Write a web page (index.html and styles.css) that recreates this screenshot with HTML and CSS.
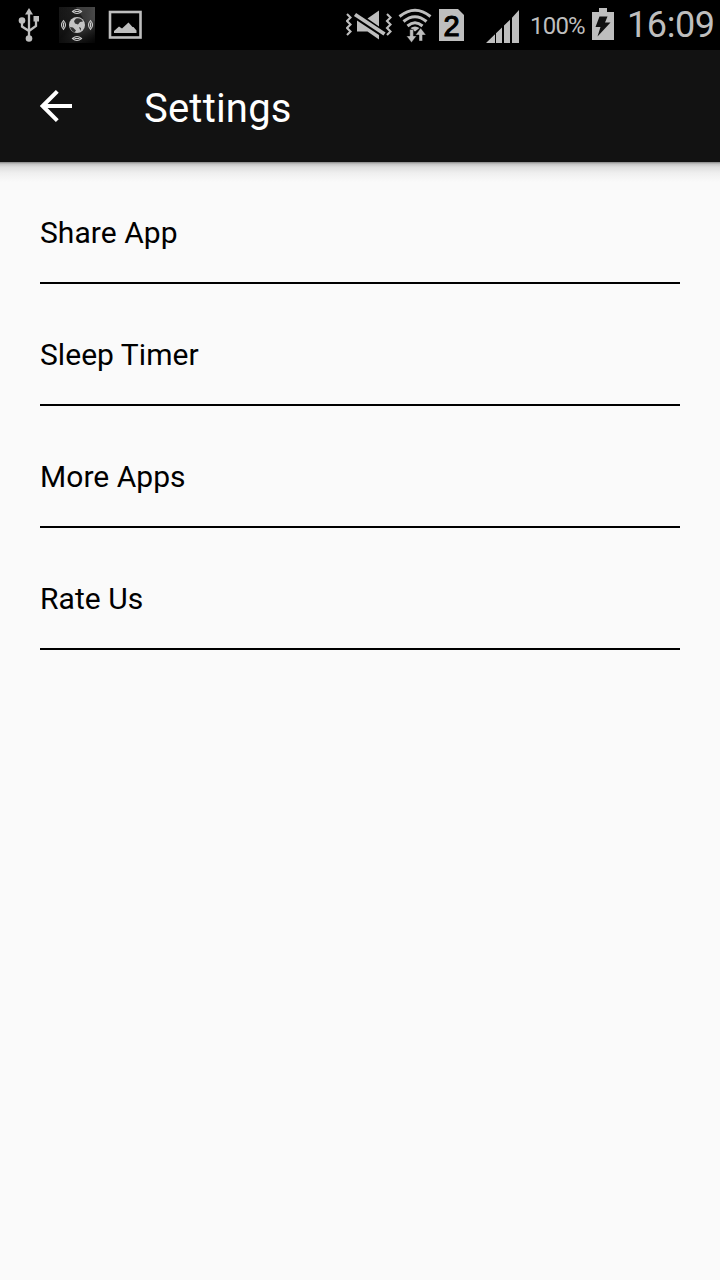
FILE: index.html
```html
<!DOCTYPE html>
<html lang="en">
<head>
    <meta charset="UTF-8">
    <title>Settings</title>
    <link rel="stylesheet" href="styles.css">
</head>
<body>

    <div class="status-bar">
        <div class="notifications">
            <!-- usb -->
            <svg width="22" height="50" viewBox="0 0 22 50" fill="#bebebe">
                <path d="M11 8l4 6.500H7z"/>
                <path d="M11 13v26M4 20v6.500L11 31M18 20v6L11 31" fill="none" stroke="#bebebe" stroke-width="2.300"/>
                <circle cx="4" cy="20.500" r="3.300"/>
                <rect x="15.500" y="16" width="5.500" height="5.500"/>
                <circle cx="11" cy="38.500" r="3.300"/>
            </svg>
            <!-- radio app -->
            <svg width="36" height="50" viewBox="59 0 36 50">
                <defs>
                    <linearGradient id="tile" x1="0" y1="0" x2="1" y2="1">
                        <stop offset="0" stop-color="#161616"/>
                        <stop offset=".45" stop-color="#272727"/>
                        <stop offset=".68" stop-color="#565656"/>
                        <stop offset="1" stop-color="#101010"/>
                    </linearGradient>
                    <linearGradient id="shade" x1="0" y1="0" x2="0" y2="1">
                        <stop offset="0" stop-color="#000" stop-opacity="0"/>
                        <stop offset="1" stop-color="#000" stop-opacity=".75"/>
                    </linearGradient>
                </defs>
                <rect x="59" y="7" width="36" height="36" fill="url(#tile)"/>
                <path d="M76 7h19v14l-9 2z" fill="#777" opacity=".35"/>
                <rect x="59" y="7" width="36" height="36" fill="url(#shade)"/>
                <circle cx="77" cy="25" r="8" fill="#c4c4c4"/>
                <path d="M76 18.500q5-1 7 3l-3 .5-2 2.500-3-1-1-2.500zM70 27l3 .5 3 3-1.500 2q-3.500-1.500-4.500-5.500zM79 27l2 1-.5 3z" fill="#333"/>
                <g fill="none" stroke="#cacaca" stroke-width="1.100">
                    <path d="M72.500 11.500q4.500-4 9 0q-4.500 4-9 0zM74.500 11.500h5"/>
                    <path d="M72.500 38.500q4.500-4 9 0q-4.500 4-9 0zM74.500 38.500h5"/>
                    <path d="M63.500 20.500q-4 4.500 0 9q4-4.500 0-9zM63.500 22.500v5"/>
                    <path d="M90.500 20.500q-4 4.500 0 9q4-4.500 0-9zM90.500 22.500v5"/>
                </g>
            </svg>
            <!-- screenshot saved -->
            <svg width="34" height="50" viewBox="108 0 34 50">
                <rect x="110" y="12" width="30.500" height="25.500" fill="none" stroke="#bebebe" stroke-width="2.600"/>
                <path d="M114 33v-2l5-4.500 3 2 6.500-6 4 4.500h1l3 3.500v2.500z" fill="#bebebe"/>
            </svg>
        </div>

        <div class="system">
            <!-- muted, vibrate -->
            <svg width="47" height="50" viewBox="346 0 47 50">
                <path d="M357 20.500L379 35v4.500L367.500 31.500H357zM367.500 18.500L379 10.500v16z" fill="#bebebe"/>
                <path d="M355 14.500l29.500 19.500" stroke="#bebebe" stroke-width="3.800"/>
                <path d="M347 14l3.500 3.500-3.500 3.500 3.500 3.500-3.500 3.500 3.500 3.500-3.500 3.500M387 14l3.500 3.500-3.500 3.500 3.500 3.500-3.500 3.500 3.500 3.500-3.500 3.500" fill="none" stroke="#bebebe" stroke-width="2.100"/>
            </svg>
            <!-- wifi -->
            <svg class="wifi" width="34" height="50" viewBox="398 0 34 50">
                <g fill="none" stroke="#bebebe" stroke-width="3">
                    <path d="M399.500 16.500q15.500-12.500 31 0"/>
                    <path d="M403.500 21.500q11.500-9.500 23 0"/>
                    <path d="M407.500 26q7.500-6.500 15 0"/>
                </g>
                <path d="M410.500 28q4.500-3 9 0l-4.500 3.500z" fill="#bebebe"/>
                <path d="M409.800 29.500h3.600v6.500h3.100l-5 6.500-5-6.500h3.300zM419 41v-6h-3.500l5.200-7 5.300 7h-3.500v6z" fill="#bebebe" stroke="#000" stroke-width=".4"/>
            </svg>
            <!-- second sim -->
            <div class="sim">2</div>
            <svg class="signal" width="34" height="50" viewBox="486 0 34 50" fill="#bebebe">
                <path d="M486 43l9-8.700V43zM496 33.300l6-5.800V43h-6zM504 25.500l6-5.800V43h-6zM512 17.700l7-7.700v33h-7z"/>
            </svg>
            <span class="percent">100%</span>
            <!-- charging battery -->
            <svg class="battery" width="22" height="50" viewBox="592 0 22 50">
                <path d="M599 8h8v4h7v28h-22V12h7z" fill="#bebebe"/>
                <path d="M599.500 16.500h8l-2.500 6h5.500L597.500 36.500l3-9.500h-5z" fill="#111"/>
            </svg>
            <span class="clock">16:09</span>
        </div>
    </div>

    <div class="toolbar">
        <svg class="back" width="32" height="32" viewBox="0 0 32 32">
            <path d="M32 16H4M17.300 1.400L2.700 16l14.600 14.600" fill="none" stroke="#fff" stroke-width="4"/>
        </svg>
        <h1>Settings</h1>
    </div>

    <ul class="settings">
        <li>Share App</li>
        <li>Sleep Timer</li>
        <li>More Apps</li>
        <li>Rate Us</li>
    </ul>

</body>
</html>
```
FILE: styles.css
```css
body {
    margin: 0;
    min-height: 1280px;
    background-color: #fafafa;
    font-family: Roboto, sans-serif;
    color: #000;
}

svg {
    display: block;
    flex: none;
}

.status-bar {
    display: flex;
    justify-content: space-between;
    height: 50px;
    padding: 0 6px 0 18px;
    background-color: #000;
    color: #bebebe;
}

.notifications {
    display: flex;
}

.notifications svg:nth-child(2) {
    margin: 0 13px 0 19px;
}

.system {
    display: flex;
    align-items: center;
}

.wifi {
    margin-left: 5px;
}

.sim {
    width: 25px;
    height: 32px;
    margin: 0 22px 0 7px;
    background-color: #bebebe;
    clip-path: polygon(0 0, 19px 0, 25px 6px, 25px 100%, 0 100%);
    color: #000;
    font: 29px/34px "Liberation Sans", sans-serif;
    -webkit-text-stroke: 1.2px #000;
    text-align: center;
}

.percent {
    width: 56px;
    margin: 2px 6px 0 10px;
    font-size: 24px;
    letter-spacing: -0.8px;
    white-space: nowrap;
}

.clock {
    width: 87px;
    margin-left: 13px;
    font-size: 36px;
    letter-spacing: -0.4px;
    white-space: nowrap;
}

.toolbar {
    display: flex;
    align-items: center;
    height: 112px;
    padding-left: 40px;
    background-color: #121212;
    color: #fff;
}

.toolbar h1 {
    margin: 4px 0 0 72px;
    font-size: 40px;
    font-weight: normal;
    letter-spacing: 0.2px;
}

/* toolbar shadow */
.settings {
    margin: 0;
    padding: 0 40px;
    background: linear-gradient(#858585, #c4c4c4 2px, #dedede 5px, #efefef 11px, #fafafa 20px);
    list-style: none;
}

.settings li {
    height: 120px;
    border-bottom: 2px solid #000;
    font-size: 30px;
    letter-spacing: 0.04px;
    line-height: 141px;
}
```
